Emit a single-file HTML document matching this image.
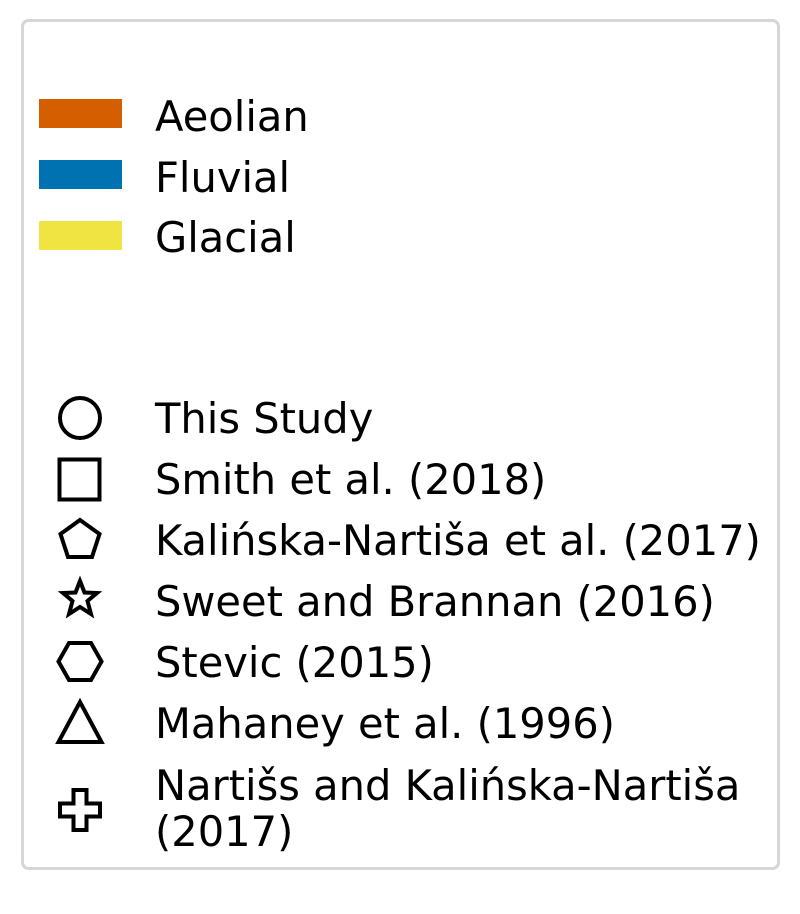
<!DOCTYPE html>
<html><head><style>html,body{margin:0;padding:0;background:#fff;}</style></head>
<body>
<svg width="800" height="914" xmlns="http://www.w3.org/2000/svg" style="display:block">
<rect x="22.5" y="20.5" width="756" height="848" rx="6" fill="#fff" stroke="#d6d6d6" stroke-width="3"/>
<rect x="39" y="99" width="83" height="29" fill="#d55e00"/>
<rect x="39" y="160" width="83" height="29" fill="#0072b2"/>
<rect x="39" y="221" width="83" height="29" fill="#f0e442"/>
<g fill="none" stroke="#000" stroke-width="4" stroke-linejoin="miter">
<circle cx="80" cy="418" r="20"/>
<rect x="59.5" y="459.5" width="40" height="40"/>
<polygon points="80,520 99.5,534 92,557 68,557 60.5,534"/>
<polygon points="80,581 84.5,592.5 97,593 87.5,601 91,614 80,607 69,614 72.5,601 63,593 75.5,592.5"/>
<polygon points="69,643 91,643 101.5,661.5 91,680 69,680 58.5,661.5"/>
<polygon points="80,702 101.5,742 58.5,742"/>
<polygon points="73.5,790 86.5,790 86.5,803.5 100,803.5 100,816.5 86.5,816.5 86.5,830 73.5,830 73.5,816.5 60,816.5 60,803.5 73.5,803.5"/>
</g>
<g font-family="'DejaVu Sans','Liberation Sans',sans-serif" font-size="41.6" fill="#000">
<text x="155" y="131">Aeolian</text>
<text x="155" y="192">Fluvial</text>
<text x="155" y="252">Glacial</text>
<text x="155" y="433">This Study</text>
<text x="155" y="494">Smith et al. (2018)</text>
<text x="155" y="555">Kalińska-Nartiša et al. (2017)</text>
<text x="155" y="616">Sweet and Brannan (2016)</text>
<text x="155" y="677">Stevic (2015)</text>
<text x="155" y="738">Mahaney et al. (1996)</text>
<text x="155" y="800">Nartišs and Kalińska-Nartiša</text>
<text x="155" y="846">(2017)</text>
</g>
</svg>
</body></html>
